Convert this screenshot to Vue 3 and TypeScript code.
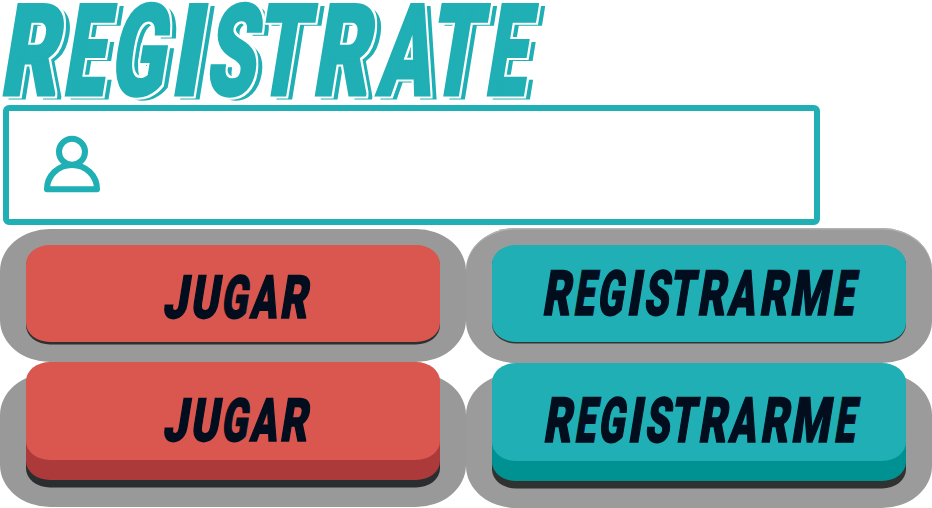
<script setup lang="ts">
type Span = [letter: string, left: number, right: number]

interface Glyph {
  letter: string
  x: number
  length: number
}

interface ButtonSpec {
  id: string
  label: string
  tone: 'red' | 'teal'
  raised: boolean
  baseline: number
  glyphs: Glyph[]
}

const FAMILY = 'Roboto, "Liberation Sans", sans-serif'
const CAP_RATIO = 0.711

const fontSizeFor = (capHeight: number): number => capHeight / CAP_RATIO

// Fits every letter of the condensed lettering between its left and right edge.
function fit(spans: Span[], fontSize: number, stroke: number, shift = 0): Glyph[] {
  const ctx = document.createElement('canvas').getContext('2d')!
  ctx.font = `900 200px ${FAMILY}`
  return spans.map(([letter, left, right]) => {
    const m = ctx.measureText(letter)
    const k = fontSize / 200
    const bearing = -m.actualBoundingBoxLeft * k
    const ink = (m.actualBoundingBoxRight + m.actualBoundingBoxLeft) * k
    const scale = (right - left - stroke) / ink
    return {
      letter,
      x: left + shift + stroke / 2 - bearing * scale,
      length: m.width * k * scale,
    }
  })
}

const titleSize = fontSizeFor(90.6)
const title = fit(
  [
    ['R', 2, 56], ['E', 64, 103.5], ['G', 110, 161], ['I', 174, 194.5], ['S', 205, 252.5],
    ['T', 253, 304.5], ['R', 314, 367], ['A', 374, 431], ['T', 426, 477], ['E', 486, 525],
  ],
  titleSize,
  3,
)

const playSize = fontSizeFor(42.4)
const playSpans: Span[] = [
  ['J', 136, 159.5], ['U', 165, 190.5], ['G', 195, 219.5], ['A', 222.5, 251], ['R', 254.5, 280.5],
]
const joinSize = fontSizeFor(44.4)
const joinSpans: Span[] = [
  ['R', 51, 77.5], ['E', 82, 101.5], ['G', 105, 129.5], ['I', 136.3, 146], ['S', 151.5, 175.5],
  ['T', 176, 201], ['R', 206, 232.5], ['A', 234.3, 263], ['R', 268, 294.5], ['M', 299, 334.5],
  ['E', 341.5, 361],
]

const buttons: ButtonSpec[] = [
  { id: 'play-down', label: 'Jugar', tone: 'red', raised: false, baseline: 73.2, glyphs: fit(playSpans, playSize, 1.6) },
  { id: 'join-down', label: 'Registrarme', tone: 'teal', raised: false, baseline: 70, glyphs: fit(joinSpans, joinSize, 1.6) },
  { id: 'play-up', label: 'Jugar', tone: 'red', raised: true, baseline: 78.3, glyphs: fit(playSpans, playSize, 1.6) },
  { id: 'join-up', label: 'Registrarme', tone: 'teal', raised: true, baseline: 78.1, glyphs: fit(joinSpans, joinSize, 1.6, 1) },
]
</script>

<template>
  <main class="page">
    <h1 class="title">
      <svg class="title-art" viewBox="0 0 560 105" width="560" height="105">
        <defs>
          <filter id="inline-shadow" x="0" y="0" width="560" height="105" filterUnits="userSpaceOnUse" color-interpolation-filters="sRGB">
            <feOffset in="SourceGraphic" dx="5.5" dy="3.3" result="moved" />
            <feMorphology in="SourceAlpha" operator="dilate" radius="2" result="gap" />
            <feComposite in="moved" in2="gap" operator="out" result="edge" />
            <feMerge>
              <feMergeNode in="edge" />
              <feMergeNode in="SourceGraphic" />
            </feMerge>
          </filter>
        </defs>
        <g filter="url(#inline-shadow)">
          <text class="lettering heading" transform="translate(0 95.1) skewX(-9.2)" :font-size="titleSize"><tspan
            v-for="(g, i) in title" :key="i" :x="g.x" y="0" :textLength="g.length" lengthAdjust="spacingAndGlyphs">{{ g.letter }}</tspan></text>
        </g>
      </svg>
    </h1>

    <label class="field">
      <svg class="user" viewBox="0 0 58 58" width="58" height="58">
        <circle cx="29" cy="15.8" r="13" />
        <path d="M4 53.300 C4 39.500 15 29 29 29 S54 39.500 54 53.300 Z" />
      </svg>
      <input class="entry" type="text" />
    </label>

    <section class="actions">
      <div v-for="b in buttons" :key="b.id" class="pad" :class="[b.tone, { raised: b.raised }]">
        <button class="face" type="button" :aria-label="b.label">
          <svg class="caption" viewBox="0 0 414 97" width="414" height="97">
            <text class="lettering" :transform="`translate(0 ${b.baseline}) skewX(-9.2)`" :font-size="b.tone === 'red' ? playSize : joinSize"><tspan
              v-for="(g, i) in b.glyphs" :key="i" :x="g.x" y="0" :textLength="g.length" lengthAdjust="spacingAndGlyphs">{{ g.letter }}</tspan></text>
          </svg>
        </button>
      </div>
    </section>
  </main>
</template>

<style>
body {
  background: #fff;
}
</style>

<style scoped>
.page {
  width: 932px;
  height: 508px;
  display: flex;
  flex-direction: column;
}

.title {
  margin: 0;
  height: 105px;
  flex: none;
}

.title-art,
.user,
.caption {
  display: block;
  flex: none;
  overflow: visible;
}

.lettering {
  font-family: Roboto, "Liberation Sans", sans-serif;
  font-weight: 900;
  fill: #020d1e;
  stroke: #020d1e;
  stroke-width: 1.6px;
}

.heading {
  fill: #1fafb4;
  stroke: #1fafb4;
  stroke-width: 3px;
}

.field {
  box-sizing: border-box;
  width: 817px;
  height: 120px;
  flex: none;
  margin: 0 0 3px 3px;
  padding-left: 34px;
  display: flex;
  align-items: center;
  gap: 20px;
  border: 6px solid #1fafb4;
  border-radius: 6px;
  background: #fff;
}

.user {
  fill: none;
  stroke: #1fafb4;
  stroke-width: 6px;
  stroke-linejoin: round;
}

.entry {
  flex: 1;
  height: 80px;
  border: 0;
  outline: 0;
  background: transparent;
  font: 40px Roboto, sans-serif;
}

.actions {
  display: grid;
  grid-template-columns: 466px 466px;
  grid-template-rows: 134px 146px;
}

.pad {
  position: relative;
  display: flex;
  justify-content: center;
  align-items: flex-start;
  padding-top: 17px;
}

.pad::before {
  content: "";
  position: absolute;
  inset: 1px 0 0;
  background: #999;
  border-radius: 50px / 42px;
}

.teal::before {
  inset: 0 0 -1px;
  background: #9b9b9b;
  box-shadow: inset 0 1.500px #b1b1b1;
}

.raised {
  padding-top: 0;
}

.raised::before {
  inset: 11px 0 1px;
  box-shadow: none;
}

.raised.teal::before {
  inset: 11px 0 0;
}

.raised.teal {
  padding-top: 1px;
}

.face {
  position: relative;
  width: 414px;
  height: 97px;
  padding: 0;
  border: 0;
  border-radius: 24px / 19px;
  background: #d9574e;
  box-shadow: 0 2.500px #2d302f;
}

.raised .face {
  height: 98px;
  box-shadow: 0 20px #ad3a3b, 0 27.500px #2a2e2e;
}

.teal .face {
  background: #1fafb4;
  box-shadow: 0 1.500px #303536;
}

.raised.teal .face {
  box-shadow: 0 20px #009292, 0 27.500px #303131;
}
</style>
